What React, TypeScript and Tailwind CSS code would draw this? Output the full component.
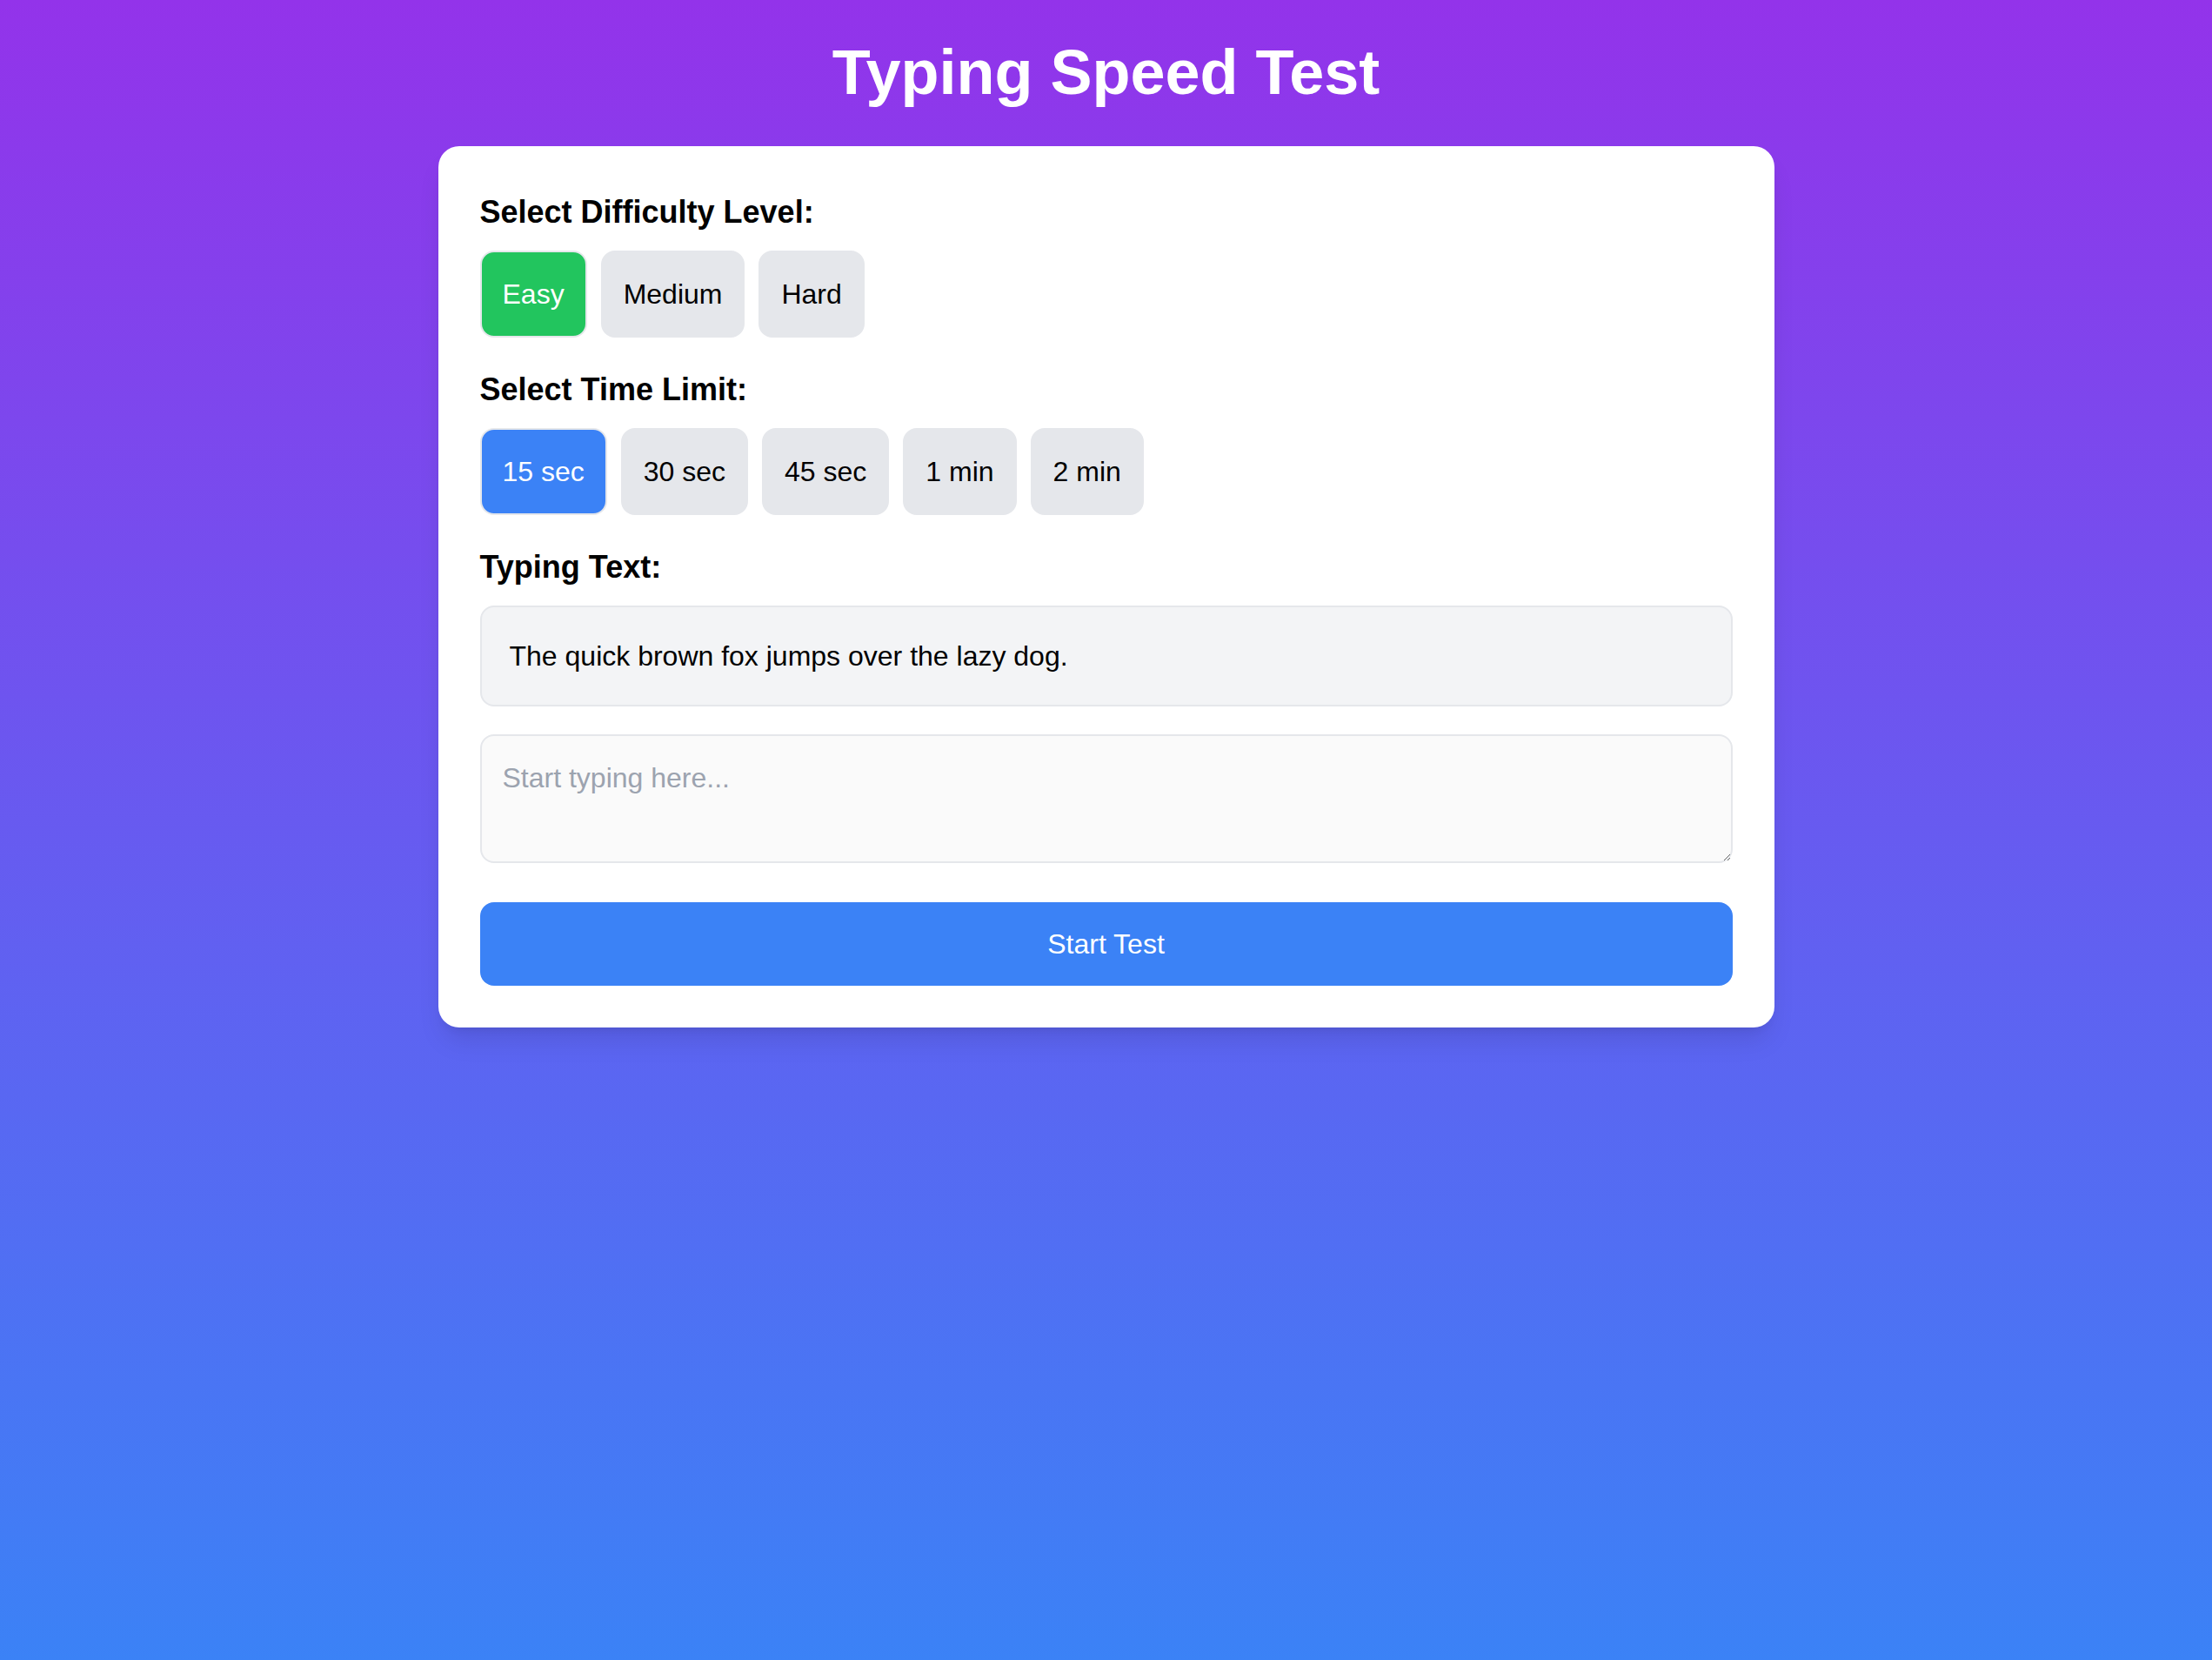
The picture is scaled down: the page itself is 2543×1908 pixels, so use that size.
import React, { useState } from 'react';

const difficulties = ['Easy', 'Medium', 'Hard'];
const timeLimits = ['15 sec', '30 sec', '45 sec', '1 min', '2 min'];

const App: React.FC = () => {
  const [difficulty, setDifficulty] = useState('Easy');
  const [timeLimit, setTimeLimit] = useState('15 sec');
  const [input, setInput] = useState('');

  return (
    <div className="min-h-screen bg-linear-to-b/srgb from-[#9333ea] to-[#3b82f6] pt-[43px] font-['Liberation_Sans',Arial,sans-serif]">
      <h1 className="mb-[45px] text-center text-[72px] font-bold leading-[80px] text-white">Typing Speed Test</h1>

      <div className="mx-auto w-[1536px] rounded-[24px] bg-white p-[48px] text-[32px] leading-[48px] text-black shadow-[0_20px_30px_-6px_rgba(0,0,0,0.1),0_8px_12px_-8px_rgba(0,0,0,0.1)]">
        <div className="mb-[32px]">
          <h2 className="mb-[16px] text-[36px] font-semibold leading-[56px]">Select Difficulty Level:</h2>
          <div className="flex gap-[16px]">
            {difficulties.map((d) => (
              <button
                key={d}
                onClick={() => setDifficulty(d)}
                className={`rounded-[16px] border-[2px] border-[#e5e7eb] p-[24px] ${
                  difficulty === d ? 'bg-[#22c55e] text-white' : 'bg-[#e5e7eb] text-black'
                }`}
              >
                {d}
              </button>
            ))}
          </div>
        </div>

        <div className="mb-[32px]">
          <h2 className="mb-[16px] text-[36px] font-semibold leading-[56px]">Select Time Limit:</h2>
          <div className="flex gap-[16px]">
            {timeLimits.map((t) => (
              <button
                key={t}
                onClick={() => setTimeLimit(t)}
                className={`rounded-[16px] border-[2px] border-[#e5e7eb] p-[24px] ${
                  timeLimit === t ? 'bg-[#3b82f6] text-white' : 'bg-[#e5e7eb] text-black'
                }`}
              >
                {t}
              </button>
            ))}
          </div>
        </div>

        <div className="mb-[32px]">
          <h2 className="mb-[16px] text-[36px] font-semibold leading-[56px]">Typing Text:</h2>
          <div className="rounded-[16px] border-[2px] border-[#e5e7eb] bg-[#f3f4f6] px-[32px] py-[32px]">
            The quick brown fox jumps over the lazy dog.
          </div>
        </div>

        <div className="mb-[32px]">
          <textarea
            rows={2}
            value={input}
            onChange={(e) => setInput(e.target.value)}
            placeholder="Start typing here..."
            className="w-full rounded-[16px] border-[2px] border-[#e5e7eb] bg-[#fafafa] p-[24px] placeholder:text-[#9ca3af] focus:outline-none"
          />
        </div>

        <button className="w-full rounded-[16px] bg-[#3b82f6] py-[24px] text-white">Start Test</button>
      </div>
    </div>
  );
};

export default App;
